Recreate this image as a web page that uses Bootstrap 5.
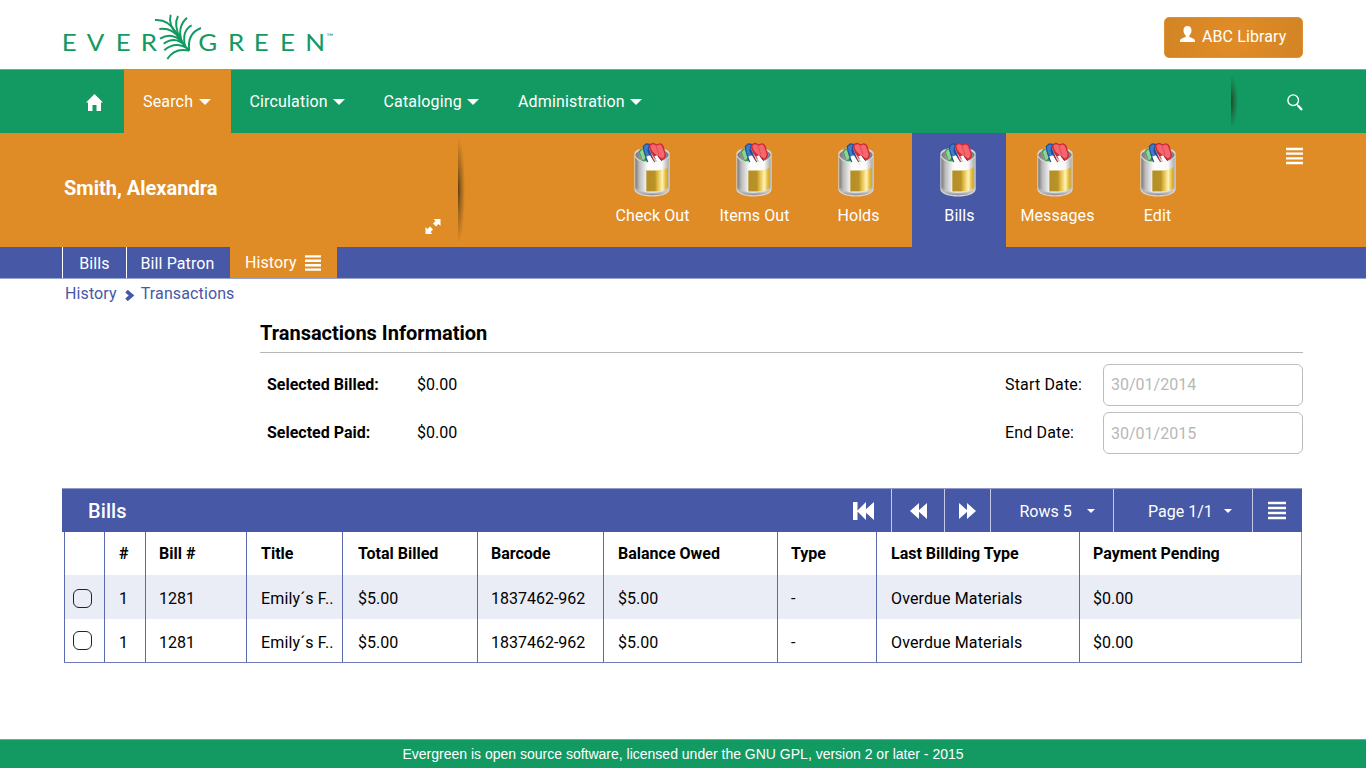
<!DOCTYPE html>
<html lang="en">
<head>
<meta charset="utf-8">
<meta name="viewport" content="width=device-width, initial-scale=1">
<title>Evergreen - Transactions</title>
<link href="https://cdn.jsdelivr.net/npm/bootstrap@5.3.0/dist/css/bootstrap.min.css" rel="stylesheet">
<style>
:root{--eg-green:#139a63;--eg-orange:#df8b26;--eg-blue:#4658a6}
body{font-family:Roboto,"Liberation Sans",sans-serif;font-size:16px;line-height:24px;color:#000;background:#fff;height:768px;overflow:hidden}
a{color:inherit;text-decoration:none}
svg{display:block;flex:none}
.top{height:69px;padding:0 63px}
.lib-btn{width:139px;height:41px;margin-top:17px;padding:0 0 2px 15px;border:1px solid #df9138;border-radius:5px;background:radial-gradient(circle,#df8b26 20%,#d28424 100%);color:#fff;font-size:16px;gap:7px;letter-spacing:.1px}
.lib-btn:hover{color:#fff;background:var(--eg-orange)}
.mainnav{height:64px;background:var(--eg-green);color:#fff;border-top:1px solid #58b98f;letter-spacing:.16px}
.mainnav a{padding:0 20px 0 19px}
.tri{width:0;height:0;border:6px solid transparent;border-top-color:#fff;border-bottom:0;margin-top:1px}
.tri-s{width:0;height:0;border:4px solid transparent;border-top-color:#fff;border-bottom:0;margin-top:-3px}
.patron{height:114px;background:var(--eg-orange);color:#fff}
.patron h1{font-size:20px;font-weight:700;line-height:24px;width:361px;margin:43px 0 0 64px}
.shade{width:7px;background:radial-gradient(ellipse 7px 50% at 0 50%,rgba(45,35,10,.75),rgba(45,35,10,.35) 45%,transparent 100%)}
.tool{width:102px;padding-top:9px}
.tool span{line-height:24px;margin:7px 0 0 1px;letter-spacing:.08px}
.subnav{height:32px;background:var(--eg-blue);color:#fff;padding-left:62px;border-bottom:1px solid #9aa5cf;letter-spacing:.1px}
.subnav a{height:31px;border-left:1px solid #fff;padding-top:2px}
.crumb{padding:3px 0 0 65px;color:var(--eg-blue);letter-spacing:.12px}
.info{margin-left:260px;width:1043px}
.info h2{font-size:20px;line-height:24px;font-weight:700;margin:15px 0 0;padding-bottom:7px;border-bottom:1px solid #b7b7b7}
.info label{width:99px;padding:9px 0 0 1px;letter-spacing:.16px}
.datefield{width:200px;height:42px;border:1px solid #bdbdbd;border-radius:6px;padding:0 7px 1px;font-size:16px;color:#b8b8b8}
.grid{margin:35px 0 0 62px;width:1240px}
.gridbar{height:44px;background:var(--eg-blue);color:#fff;border-top:1px solid #8f9acb}
.gridbar h3{font-size:20px;line-height:24px;font-weight:500;margin:0 auto 0 26px;letter-spacing:.1px}
.gridbar .cellbtn{height:43px;border-left:1px solid #c5cbe5}
.bills{width:1238px;margin-left:2px;table-layout:fixed;border-collapse:separate;border-spacing:0;white-space:nowrap;border-bottom:1px solid #6f7dbb}
.bills th,.bills td{border-left:1px solid #5a6ab0;padding:0 0 0 14px;height:43px;vertical-align:middle}
.bills td{height:43.5px;padding-top:5px}
.bills tr>:nth-child(3),.bills tr>:nth-child(6),.bills tr>:nth-child(8),.bills tr>:nth-child(10){padding-left:13px}
.bills tr>:nth-child(5){padding-left:15px}
.bills td:nth-child(4),.bills td:nth-child(9){letter-spacing:.13px}
.bills th:last-child,.bills td:last-child{border-right:1px solid #7e8bc3}
.bills .odd td{background:#eaedf5}
.bills input{appearance:none;display:block;width:19px;height:19px;border:1.3px solid #222;border-radius:6px;background:#fff;margin:-4px 0 0 -6px}
.bills .odd input{background:transparent;margin-top:-2px}
.foot{height:30px;margin-top:76px;background:var(--eg-green);color:#fff;font:14px/28px "Liberation Sans",Arial,sans-serif;border-top:1px solid #58b98f}
</style>
</head>
<body>
<svg width="0" height="0" class="position-absolute" aria-hidden="true">
  <defs>
    <linearGradient id="cup" x1="0" x2="1"><stop offset="0" stop-color="#777"/><stop offset=".12" stop-color="#bbb"/><stop offset=".38" stop-color="#fff"/><stop offset=".8" stop-color="#fafafa"/><stop offset="1" stop-color="#aaa"/></linearGradient>
    <linearGradient id="rim" x1="0" x2="1"><stop offset="0" stop-color="#777"/><stop offset=".5" stop-color="#ddd"/><stop offset="1" stop-color="#777"/></linearGradient>
    <linearGradient id="gold" x1="0" x2="1"><stop offset="0" stop-color="#b48f25"/><stop offset=".4" stop-color="#b99228"/><stop offset=".5" stop-color="#dcb53a"/><stop offset=".75" stop-color="#fff3b5"/><stop offset=".9" stop-color="#e8bd3d"/><stop offset="1" stop-color="#d6a21d"/></linearGradient>
    <linearGradient id="base" x1="0" x2="0" y1="0" y2="1"><stop offset="0" stop-color="#fff" stop-opacity="0"/><stop offset="1" stop-color="#888"/></linearGradient>
    <symbol id="pot" viewBox="0 0 108 164">
      <path d="M1 34C3 22 24 17 54 17s51 5 53 17v108c-2 14-26 21-53 21S3 156 1 142Z" fill="#d8d6d2"/>
      <path d="M4 38C7 25 26 21 54 21s47 4 50 17c-3 14-22 22-50 22S7 52 4 38Z" fill="url(#rim)"/>
      <path d="M15 29q1-10 13-10l12 36-14 4Z" fill="#3b9d50"/><path d="M18 30q2-8 9-8l8 27-9 5Z" fill="#8ed394"/>
      <path d="M26 12 36 3l12 2-2 16 12 30-15 7q-14-18-17-46Z" fill="#1d50a0"/><path d="m30 13 8-6 6 2-4 16 8 22-6 3Q31 34 30 13Z" fill="#3f7cc6"/>
      <path d="M44 14Q47 3 58 2l10 4 9-3q12 2 13 13l6 20q1 13-12 18L63 50Q48 32 44 14Z" fill="#cf2a38"/><path d="M49 13q2-7 9-7l10 5 9-4q8 2 9 11l6 18q0 9-8 13L66 37Q53 29 49 13Z" fill="#f5676c"/><path d="m66 12 9 26" stroke="#dc4350" stroke-width="2.500"/>
      <path d="m37 43 11-4 13 21H43ZM61 42l9-3 14 20H70Z" fill="#fff"/><path d="m51 40 11 20M71 40l12 16" stroke="#a3202f" stroke-width="3"/><path d="m34 47 8 13" stroke="#193f80" stroke-width="3"/>
      <path d="M4 45c5 7 10 14 19 12 6-2 11 6 19 3 8-4 12 3 20 0 8-4 13 1 20-3 8-4 17-4 22-12v95c-4 13-25 18-50 18S8 153 4 140Z" fill="url(#cup)"/>
      <path d="M37 85h34q18-2 30-9v62q-14 11-34 10H37Z" fill="url(#gold)"/>
      <path d="M4 132q12 19 50 19t50-19v8q-5 19-50 19T4 140Z" fill="url(#base)"/>
    </symbol>
    <symbol id="lines" viewBox="0 0 18 18"><path d="M0 1.5h18M0 6.5h18M0 11.5h18M0 16.5h18" stroke="#fff" stroke-width="2.600"/></symbol>
  </defs>
</svg>

<header class="top d-flex justify-content-between">
  <a href="#" aria-label="Evergreen"><svg width="275" height="66" viewBox="63 0 275 66">
    <g fill="#139a63" font-family="Lato" font-size="24">
      <g transform="scale(1.08 1)">
        <text y="51.300" x="57.200 80.300 107.200 130.400">EVER</text>
        <text y="51.300" x="183.600 211.200 235 259.200 282.600">GREEN</text>
      </g>
      <text y="39.500" x="326.500" font-size="9">™</text>
    </g>
    <g transform="translate(50 5) scale(.33333)" fill="none" stroke="#139a63" stroke-width="5.800">
      <path d="M315 45Q355 42 379 83T418 137"/>
      <path d="M362 29Q353 61 385 93M384 33Q370 60 391 101M411 38Q379 67 397 112M425 61Q395 76 405 124M453 69Q410 86 418 137"/>
      <path d="M328 72Q365 67 389 100M330 101Q366 79 398 112M341 116Q376 91 407 123M343 136Q377 106 416 133M352 162Q373 127 418 137"/>
    </g>
  </svg></a>
  <button class="btn lib-btn d-flex align-items-center">
    <svg width="15" height="16" viewBox="0 0 15 16" style="margin-top:-5px"><path d="M7.500 0C4.800 0 3.500 1.700 3.500 4.400c0 2 .9 4 2.100 4.900v1.500C4.700 12 0 12.200 0 15v1h15v-1c0-2.800-4.700-3-5.600-4.200V9.300c1.200-.9 2.100-2.900 2.100-4.900C11.500 1.700 10.200 0 7.500 0Z" fill="#fff"/></svg>
    ABC Library
  </button>
</header>

<nav class="mainnav d-flex">
  <a href="#" class="d-flex align-items-center" style="width:124px;padding:1px 0 0 86px" aria-label="Home"><svg width="17" height="17" viewBox="0 0 17 17"><path d="M8.500 0 17 8.600h-2V17h-4.500v-6h-4v6H2V8.600H0Z" fill="#fff"/></svg></a>
  <a href="#" class="d-flex align-items-center justify-content-between" style="width:106.500px;background:var(--eg-orange)">Search <i class="tri"></i></a>
  <a href="#" class="d-flex align-items-center justify-content-between" style="width:134px">Circulation <i class="tri"></i></a>
  <a href="#" class="d-flex align-items-center justify-content-between" style="width:134.500px">Cataloging <i class="tri"></i></a>
  <a href="#" class="d-flex align-items-center justify-content-between" style="width:162.500px">Administration <i class="tri"></i></a>
  <div class="shade my-1" style="margin-left:569px"></div>
  <a href="#" class="d-flex align-items-center" style="padding:1px 0 0 49.500px" aria-label="Find"><svg width="16" height="17" viewBox="0 0 16 17" fill="none" stroke="#fff"><circle cx="6.200" cy="6.200" r="5.300" stroke-width="1.400"/><path d="m10 10.500 1 1" stroke-width="1.500"/><path d="m11 11.500 4 4.500" stroke-width="2.400"/></svg></a>
</nav>

<section class="patron d-flex">
  <h1>Smith, Alexandra</h1>
  <svg class="align-self-end mb-2" width="16" height="24" viewBox="0 0 16 24"><path d="M8.500 4H15.500v7l-2-2-2.500 2.500-3-3L10.500 6ZM7.500 19H.500v-7l2 2L5 11.500l3 3L5.500 17Z" fill="#fff"/></svg>
  <div class="shade my-1" style="margin-left:17px"></div>
  <div class="d-flex" style="margin-left:136px">
    <a href="#" class="tool d-flex flex-column align-items-center"><svg width="36" height="55"><use href="#pot"/></svg><span>Check Out</span></a>
    <a href="#" class="tool d-flex flex-column align-items-center"><svg width="36" height="55"><use href="#pot"/></svg><span>Items Out</span></a>
    <a href="#" class="tool d-flex flex-column align-items-center" style="margin-right:5px"><svg width="36" height="55"><use href="#pot"/></svg><span class="ps-1">Holds</span></a>
    <a href="#" class="tool d-flex flex-column align-items-center" style="width:94px;background:var(--eg-blue)"><svg width="36" height="55" style="margin-right:2px"><use href="#pot"/></svg><span>Bills</span></a>
    <a href="#" class="tool d-flex flex-column align-items-center"><svg width="36" height="55" style="margin-right:4px"><use href="#pot"/></svg><span>Messages</span></a>
    <a href="#" class="tool d-flex flex-column align-items-center" style="width:98px"><svg width="36" height="55" style="margin-left:1px"><use href="#pot"/></svg><span>Edit</span></a>
  </div>
  <a href="#" aria-label="Menu" style="margin:14px 0 0 80px"><svg width="17" height="18"><use href="#lines"/></svg></a>
</section>

<nav class="subnav d-flex">
  <a href="#" class="d-flex align-items-center justify-content-center" style="width:64px">Bills</a>
  <a href="#" class="d-flex align-items-center justify-content-center" style="width:104px;padding-right:2px">Bill Patron</a>
  <a href="#" class="d-flex align-items-center justify-content-between border-0" style="width:107px;padding:0 16px 0 15px;background:var(--eg-orange)">History <svg width="16" height="18"><use href="#lines"/></svg></a>
</nav>

<div class="crumb d-flex align-items-center">History
  <svg width="10" height="11" viewBox="0 0 10 11" style="margin:2px 6px 0 8px"><path d="m1.500 1.200 5 4.300-5 4.300" fill="none" stroke="#4658a6" stroke-width="3.700"/></svg>Transactions</div>

<main>
  <section class="info">
    <h2>Transactions Information</h2>
    <div class="d-flex justify-content-between">
      <div style="padding:20px 0 0 7px">
        <div class="d-flex mb-4"><b style="width:150px">Selected Billed:</b>$0.00</div>
        <div class="d-flex"><b style="width:150px">Selected Paid:</b>$0.00</div>
      </div>
      <div style="padding-top:10.500px">
        <div class="d-flex mb-2" style="height:40px"><label>Start Date:</label><input class="datefield" value="30/01/2014"></div>
        <div class="d-flex" style="height:41.500px"><label>End Date:</label><input class="datefield" style="padding:1px 7px 0" value="30/01/2015"></div>
      </div>
    </div>
  </section>

  <section class="grid">
    <div class="gridbar d-flex align-items-center">
      <h3>Bills</h3>
      <svg width="21" height="18" viewBox="0 0 21 18" style="margin-right:17px" fill="#fff"><path d="M0 0h4.500v18H0ZM13 0v18L4 9ZM21 0v18L11 9Z"/></svg>
      <a href="#" class="cellbtn d-flex align-items-center justify-content-center" style="width:53px"><svg width="17" height="18" viewBox="0 0 17 18" fill="#fff"><path d="M9 1v16L0 9ZM17 1v16L8 9Z"/></svg></a>
      <a href="#" class="cellbtn d-flex align-items-center justify-content-center" style="width:46px"><svg width="17" height="18" viewBox="0 0 17 18" fill="#fff"><path d="M0 1v16l9-8ZM8 1v16l9-8Z"/></svg></a>
      <a href="#" class="cellbtn d-flex align-items-center justify-content-between" style="width:123px;padding:3px 18px 0 28.500px">Rows 5 <i class="tri-s"></i></a>
      <a href="#" class="cellbtn d-flex align-items-center justify-content-between" style="width:139px;padding:3px 20px 0 34px">Page 1/1 <i class="tri-s"></i></a>
      <a href="#" class="cellbtn d-flex align-items-center justify-content-center" style="width:50px;padding-right:1px"><svg width="18" height="19"><use href="#lines"/></svg></a>
    </div>
    <table class="bills">
      <colgroup><col style="width:40px"><col style="width:41px"><col style="width:101px"><col style="width:96px"><col style="width:135px"><col style="width:126px"><col style="width:174px"><col style="width:99px"><col style="width:203px"><col style="width:223px"></colgroup>
      <thead><tr><th></th><th>#</th><th>Bill #</th><th>Title</th><th>Total Billed</th><th>Barcode</th><th>Balance Owed</th><th>Type</th><th>Last Billding Type</th><th>Payment Pending</th></tr></thead>
      <tbody>
        <tr class="odd"><td><input type="checkbox"></td><td>1</td><td>1281</td><td>Emily´s F..</td><td>$5.00</td><td>1837462-962</td><td>$5.00</td><td>-</td><td>Overdue Materials</td><td>$0.00</td></tr>
        <tr><td><input type="checkbox"></td><td>1</td><td>1281</td><td>Emily´s F..</td><td>$5.00</td><td>1837462-962</td><td>$5.00</td><td>-</td><td>Overdue Materials</td><td>$0.00</td></tr>
      </tbody>
    </table>
  </section>
</main>

<footer class="foot text-center">Evergreen is open source software, licensed under the GNU GPL, version 2 or later - 2015</footer>
<script src="https://cdn.jsdelivr.net/npm/bootstrap@5.3.0/dist/js/bootstrap.bundle.min.js"></script>
</body>
</html>
